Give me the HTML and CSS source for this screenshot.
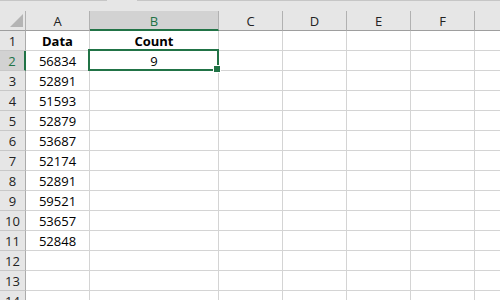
FILE: index.html
```html
<!DOCTYPE html>
<html lang="en">
<head>
	<meta charset="UTF-8">
	<title>Sheet1</title>
	<link rel="stylesheet" href="styles.css">
</head>
<body>
	<div class="sheet">
		<div class="topbar"><div class="bar"></div><div class="gap"></div><div class="bar fill"></div></div>
		<div class="row head">
			<div class="cell rh corner"><svg width="14" height="14" viewBox="0 0 14 14"><polygon points="13,0 13,13 0,13" fill="#b4b4b4"/></svg></div>
			<div class="cell ch">A</div>
			<div class="cell ch sel">B</div>
			<div class="cell ch">C</div>
			<div class="cell ch">D</div>
			<div class="cell ch">E</div>
			<div class="cell ch">F</div>
			<div class="cell ch last"></div>
		</div>
		<div class="row"><div class="cell rh">1</div><div class="cell b">Data</div><div class="cell b">Count</div><div class="cell"></div><div class="cell"></div><div class="cell"></div><div class="cell"></div><div class="cell last"></div></div>
		<div class="row"><div class="cell rh sel">2</div><div class="cell">56834</div><div class="cell">9</div><div class="cell"></div><div class="cell"></div><div class="cell"></div><div class="cell"></div><div class="cell last"></div></div>
		<div class="row"><div class="cell rh">3</div><div class="cell">52891</div><div class="cell"></div><div class="cell"></div><div class="cell"></div><div class="cell"></div><div class="cell"></div><div class="cell last"></div></div>
		<div class="row"><div class="cell rh">4</div><div class="cell">51593</div><div class="cell"></div><div class="cell"></div><div class="cell"></div><div class="cell"></div><div class="cell"></div><div class="cell last"></div></div>
		<div class="row"><div class="cell rh">5</div><div class="cell">52879</div><div class="cell"></div><div class="cell"></div><div class="cell"></div><div class="cell"></div><div class="cell"></div><div class="cell last"></div></div>
		<div class="row"><div class="cell rh">6</div><div class="cell">53687</div><div class="cell"></div><div class="cell"></div><div class="cell"></div><div class="cell"></div><div class="cell"></div><div class="cell last"></div></div>
		<div class="row"><div class="cell rh">7</div><div class="cell">52174</div><div class="cell"></div><div class="cell"></div><div class="cell"></div><div class="cell"></div><div class="cell"></div><div class="cell last"></div></div>
		<div class="row"><div class="cell rh">8</div><div class="cell">52891</div><div class="cell"></div><div class="cell"></div><div class="cell"></div><div class="cell"></div><div class="cell"></div><div class="cell last"></div></div>
		<div class="row"><div class="cell rh">9</div><div class="cell">59521</div><div class="cell"></div><div class="cell"></div><div class="cell"></div><div class="cell"></div><div class="cell"></div><div class="cell last"></div></div>
		<div class="row"><div class="cell rh">10</div><div class="cell">53657</div><div class="cell"></div><div class="cell"></div><div class="cell"></div><div class="cell"></div><div class="cell"></div><div class="cell last"></div></div>
		<div class="row"><div class="cell rh">11</div><div class="cell">52848</div><div class="cell"></div><div class="cell"></div><div class="cell"></div><div class="cell"></div><div class="cell"></div><div class="cell last"></div></div>
		<div class="row"><div class="cell rh">12</div><div class="cell"></div><div class="cell"></div><div class="cell"></div><div class="cell"></div><div class="cell"></div><div class="cell"></div><div class="cell last"></div></div>
		<div class="row"><div class="cell rh">13</div><div class="cell"></div><div class="cell"></div><div class="cell"></div><div class="cell"></div><div class="cell"></div><div class="cell"></div><div class="cell last"></div></div>
		<div class="row"><div class="cell rh">14</div><div class="cell"></div><div class="cell"></div><div class="cell"></div><div class="cell"></div><div class="cell"></div><div class="cell"></div><div class="cell last"></div></div>
		<div class="selection"><div class="handle"></div></div>
	</div>
</body>
</html>
```

FILE: styles.css
```css
html,body{margin:0;padding:0;background:#fff;}
body{width:500px;height:300px;overflow:hidden;font-family:"Open Sans","Liberation Sans",sans-serif;font-size:13px;color:#000;}
.sheet{position:relative;width:500px;height:300px;overflow:hidden;}

.topbar{display:flex;height:11px;background:#e6e6e6;}
.topbar .bar{width:107px;height:1px;background:#c6c6c6;}
.topbar .gap{width:30px;}
.topbar .fill{flex:1;}

.row{display:grid;grid-template-columns:26px 64px 129px 64px 64px 64px 64px 1fr;height:20px;}
.cell{box-sizing:border-box;height:20px;padding-top:2px;border-right:1px solid #d4d4d4;border-bottom:1px solid #d4d4d4;display:flex;align-items:center;justify-content:center;line-height:1;white-space:nowrap;}
.cell.last{border-right:none;}
.cell.b{font-weight:bold;}

.head{background:#e6e6e6;}
.head .cell{border-right-color:#b1b1b1;border-bottom-color:#9e9e9e;color:#222;}
.head .ch.sel{background:#d2d2d2;color:#217346;border-bottom:2px solid #217346;}
.corner{align-items:flex-end;justify-content:flex-end;padding:0 1px 2px 0;}
.corner svg{display:block;}

.rh{background:#e6e6e6;border-right-color:#ababab;border-bottom-color:#c8c8c8;color:#222;}
.rh.sel{background:#d2d2d2;color:#217346;border-right:2px solid #217346;}

.selection{position:absolute;left:88px;top:49px;width:131px;height:22px;box-sizing:border-box;border:2px solid #217346;}
.handle{position:absolute;right:-4px;bottom:-4px;width:6px;height:6px;background:#217346;border:1px solid #fff;}
```
